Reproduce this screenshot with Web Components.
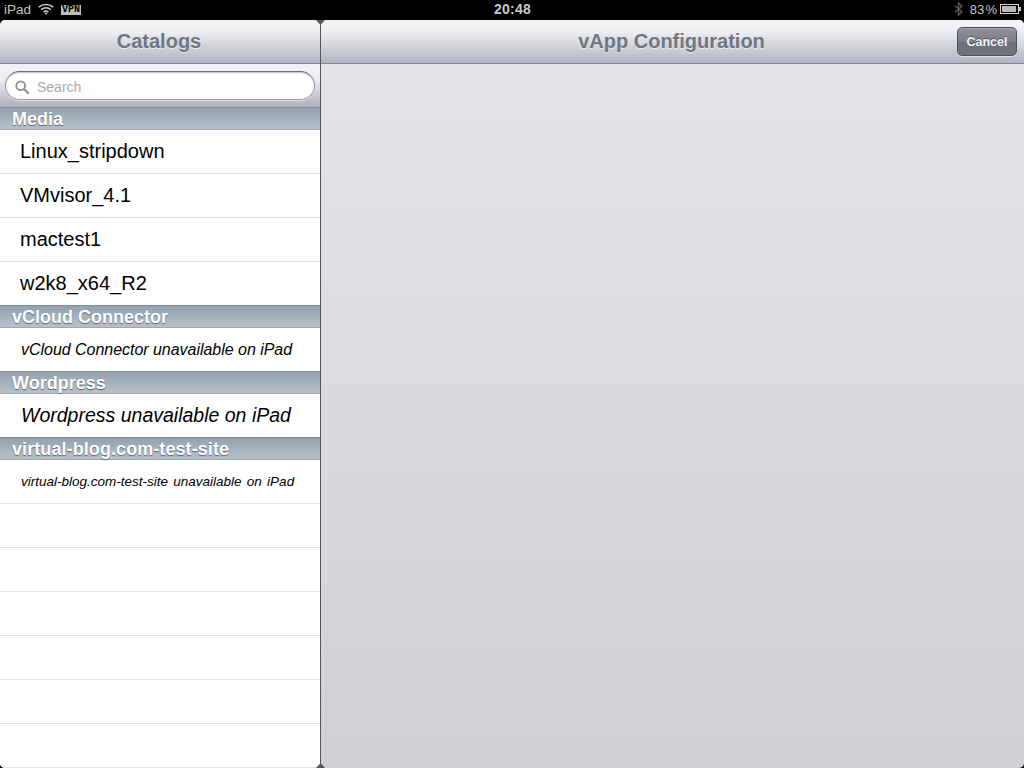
<!DOCTYPE html>
<html lang="en">

<head>
    <title>vApp Configuration</title>
    <meta charset="utf-8">
    <meta name="viewport" content="width=device-width, initial-scale=1" />

    <style>
        html,
        body {
            width: 1024px;
            height: 768px;
            margin: 0;
            overflow: hidden;
            background: #000;
            font-family: "Liberation Sans", Arial, sans-serif;
        }
    </style>

    <template id="status-bar">
        <style>
            :host {
                display: flex;
                align-items: center;
                height: 20px;
                padding: 0 3px 2px 4px;
                box-sizing: border-box;
                background: #000;
                color: #c4c4c4;
                font-size: 13.5px;
            }

            svg {
                display: block;
            }

            .left,
            .right {
                display: flex;
                align-items: center;
                flex: 1;
            }

            .right {
                justify-content: flex-end;
            }

            .vpn {
                margin: 2px 0 0 7px;
                width: 20px;
                height: 10px;
                background: #bdbdbd;
                color: #000;
                font: bold 10px/10px "Liberation Mono", monospace;
                text-align: center;
            }

            .time {
                font-weight: bold;
                font-size: 14px;
                letter-spacing: 0.2px;
                color: #c8c8c8;
            }

            .pct {
                margin: 0 3px 0 7px;
                font-size: 13px;
                word-spacing: -2.5px;
            }
        </style>
        <div class="left">
            <span>iPad</span>
            <svg style="margin-left:7px" width="16" height="12" viewBox="0 0 16 12" fill="none" stroke="#c4c4c4" stroke-width="1.7">
                <path d="M.8 4.2C4.6.6 11.4.6 15.2 4.2" />
                <path d="M3.2 6.6c2.8-2.4 6.8-2.4 9.6 0" />
                <path d="M5.7 9c1.4-1.1 3.2-1.1 4.6 0" />
                <path d="M8 11.8 6.6 10.2c.8-.5 2-.5 2.8 0z" fill="#c4c4c4" stroke="none" />
            </svg>
            <span class="vpn">VPN</span>
        </div>
        <span class="time">20:48</span>
        <div class="right">
            <svg width="9" height="14" viewBox="0 0 9 14" fill="none" stroke="#5e5e5e" stroke-width="1.3">
                <path d="M1 3.8 8 9.8 4.5 13V1L8 4.2 1 10.2" />
            </svg>
            <span class="pct">83 %</span>
            <svg width="21" height="10" viewBox="0 0 21 10">
                <rect x=".5" y=".5" width="18" height="9" fill="none" stroke="#d0d0d0" />
                <rect x="2" y="2" width="14" height="6" fill="#b8b8b8" />
                <rect x="19" y="3" width="2" height="4" fill="#c4c4c4" />
            </svg>
        </div>
    </template>

    <template id="nav-bar">
        <style>
            :host {
                display: flex;
                align-items: center;
                justify-content: center;
                height: 44px;
                flex: none;
                box-sizing: border-box;
                position: relative;
                background: linear-gradient(#f4f5f7, #eceef1 28%, #b4b7c3 96%);
                border-bottom: 1px solid #7e828c;
                color: #6e7681;
                font-size: 20px;
                font-weight: bold;
                text-shadow: 0 1px 0 rgba(255, 255, 255, .55);
                padding: 0 2px 1px 0;
            }

            ::slotted([slot=action]) {
                position: absolute;
                right: 7px;
                top: 7px;
            }
        </style>
        <slot></slot>
        <slot name="action"></slot>
    </template>

    <template id="bar-button">
        <style>
            :host {
                display: flex;
                align-items: center;
                justify-content: center;
                width: 60px;
                height: 29px;
                box-sizing: border-box;
                border-radius: 5px;
                border: 1px solid #4d5259;
                background: linear-gradient(#8f949b, #7b8089 50%, #6c717b 51%, #6f747e);
                box-shadow: 0 1px 0 rgba(255, 255, 255, .5), inset 0 1px 0 rgba(255, 255, 255, .2);
                color: #f2f3f4;
                font-size: 12.5px;
                font-weight: bold;
                text-shadow: 0 -1px 0 rgba(0, 0, 0, .4);
            }
        </style>
        <slot></slot>
    </template>

    <template id="search-bar">
        <style>
            :host {
                display: block;
                height: 44px;
                flex: none;
                box-sizing: border-box;
                padding: 7px 5px 0;
                background: linear-gradient(#f1f2f4, #eceef1 35%, #acb0bc);
                border-bottom: 1px solid #858a94;
            }

            .field {
                display: flex;
                align-items: center;
                gap: 8px;
                height: 29px;
                box-sizing: border-box;
                padding: 2px 9px 0;
                border-radius: 15px;
                background: #fff;
                border: 1px solid #9a9ea6;
                border-top-color: #6e7278;
                box-shadow: inset 0 1px 1px rgba(0, 0, 0, .25), 0 1px 0 rgba(255, 255, 255, .5);
                color: #a9acb2;
                font-size: 14px;
            }

            svg {
                display: block;
                flex: none;
            }
        </style>
        <div class="field">
            <svg width="14" height="14" viewBox="0 0 14 14" fill="none" stroke="#8b8f96">
                <circle cx="5.7" cy="5.7" r="4.4" stroke-width="1.8" />
                <path d="M9 9l4 4" stroke-width="2.4" stroke-linecap="round" />
            </svg>
            <slot></slot>
        </div>
    </template>

    <template id="section-head">
        <style>
            :host {
                display: block;
                height: 22px;
                flex: none;
                box-sizing: border-box;
                padding: 0 12px;
                position: relative;
                background: linear-gradient(#92a2ae, #b8c1c9);
                box-shadow: 0 -1px 0 #7f8d99;
                border-bottom: 1px solid #a0a6ac;
                color: #fff;
                font-size: 18px;
                font-weight: bold;
                line-height: 23px;
                text-shadow: 0 1px 1px rgba(70, 80, 90, .8);
            }
        </style>
        <slot></slot>
    </template>

    <template id="table-row">
        <style>
            :host {
                display: flex;
                align-items: center;
                height: 44px;
                flex: none;
                box-sizing: border-box;
                padding: 0 20px;
                background: #fff;
                border-bottom: 1px solid #e1e1e1;
                color: #000;
                font-size: 20px;
                white-space: nowrap;
            }

            :host([note]) {
                font-style: italic;
                padding-left: 21px;
            }
        </style>
        <slot></slot>
    </template>

    <template id="split-view">
        <style>
            :host {
                display: grid;
                grid-template-columns: 320px 1fr;
                column-gap: 1px;
                height: 748px;
                background: #565656;
                border-radius: 5px;
                position: relative;
                overflow: hidden;
            }

            .pane {
                display: flex;
                flex-direction: column;
                min-width: 0;
                overflow: hidden;
            }

            .detail {
                background: linear-gradient(#e3e5ea, #d0d1d6);
            }

            .notch {
                position: absolute;
                left: 316px;
                width: 9px;
                height: 5px;
                background: #565656;
            }

            .notch.top {
                top: 0;
                clip-path: polygon(0 0, 100% 0, 50% 100%);
            }

            .notch.bottom {
                bottom: 0;
                clip-path: polygon(50% 0, 100% 100%, 0 100%);
            }
        </style>
        <div class="pane"><slot name="master"></slot></div>
        <div class="pane detail"><slot name="detail"></slot></div>
        <div class="notch top"></div>
        <div class="notch bottom"></div>
    </template>

    <template id="table-list">
        <style>
            :host {
                display: flex;
                flex-direction: column;
                flex: 1;
                background: #fff;
                overflow: hidden;
            }
        </style>
        <slot></slot>
    </template>

    <script>
        document
            .querySelectorAll('template')
            .forEach(element => {
                customElements.define(element.id, class extends HTMLElement {
                    constructor() {
                        super()
                            .attachShadow({ mode: "open" })
                            .appendChild(element.content.cloneNode(true));
                    }
                })
            })
    </script>
</head>

<body>
    <status-bar></status-bar>
    <split-view>
        <div slot="master" style="display:contents">
            <nav-bar>Catalogs</nav-bar>
            <search-bar>Search</search-bar>
            <table-list>
                <section-head>Media</section-head>
                <table-row>Linux_stripdown</table-row>
                <table-row>VMvisor_4.1</table-row>
                <table-row>mactest1</table-row>
                <table-row>w2k8_x64_R2</table-row>
                <section-head>vCloud Connector</section-head>
                <table-row note style="font-size:16px;letter-spacing:-.03px">vCloud Connector unavailable on iPad</table-row>
                <section-head>Wordpress</section-head>
                <table-row note style="font-size:19.5px">Wordpress unavailable on iPad</table-row>
                <section-head style="letter-spacing:.08px">virtual-blog.com-test-site</section-head>
                <table-row note style="font-size:13.5px;word-spacing:1.5px">virtual-blog.com-test-site unavailable on iPad</table-row>
                <table-row></table-row>
                <table-row></table-row>
                <table-row></table-row>
                <table-row></table-row>
                <table-row></table-row>
                <table-row></table-row>
            </table-list>
        </div>
        <div slot="detail" style="display:contents">
            <nav-bar>vApp Configuration<bar-button slot="action">Cancel</bar-button></nav-bar>
        </div>
    </split-view>
</body>

</html>
